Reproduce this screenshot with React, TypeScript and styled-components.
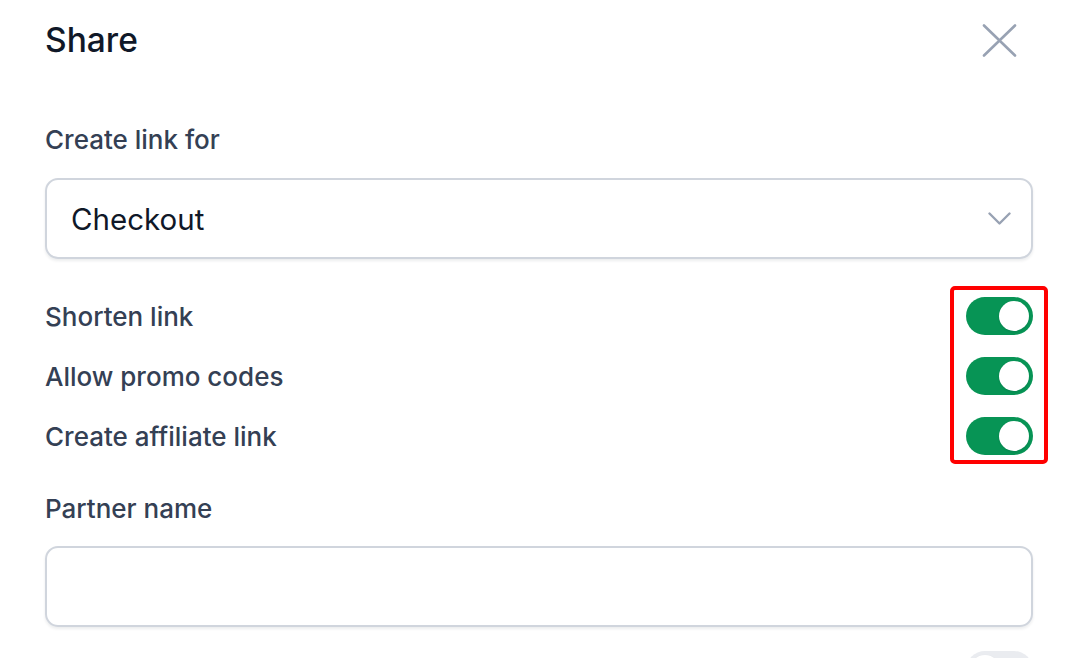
import { useState } from 'react'
import styled, { createGlobalStyle } from 'styled-components'

const GlobalStyle = createGlobalStyle`
    body {
        margin: 0;
        background: #ffffff;
        font-family: Inter, 'Noto Sans', sans-serif;
        color: #344054;
    }
`

const Page = styled.div`
    padding: 0 42px 0 45px;
    display: flex;
    flex-direction: column;
`

const Header = styled.div`
    height: 80px;
    display: flex;
    align-items: center;
    justify-content: space-between;
`

const Title = styled.h1`
    margin: 0;
    font-size: 33.5px;
    font-weight: 500;
    color: #101828;
`

const CloseButton = styled.button`
    border: none;
    background: none;
    padding: 0;
    margin-right: 16px;
    display: flex;
    color: #98a2b3;
    cursor: pointer;
`

const Label = styled.div<{ $gap: number }>`
    margin-top: ${(p) => p.$gap}px;
    font-size: 26px;
    font-weight: 500;
    line-height: 32px;
    color: #344054;
`

const Field = styled.div<{ $gap: number }>`
    margin-top: ${(p) => p.$gap}px;
    height: 81px;
    box-sizing: border-box;
    border: 2px solid #d0d5dd;
    border-radius: 13px;
    box-shadow: 0 2px 3px rgba(16, 24, 40, 0.08);
    display: flex;
    align-items: center;
    justify-content: space-between;
    padding: 0 20px 0 24px;
    font-size: 29.5px;
    color: #101828;
`

const Chevron = styled.svg`
    color: #98a2b3;
`

const ToggleList = styled.div`
    position: relative;
    margin-top: 38px;
    display: flex;
    flex-direction: column;
    gap: 22px;
`

const Highlight = styled.div`
    position: absolute;
    top: -11px;
    bottom: -9px;
    right: -15px;
    width: 98px;
    box-sizing: border-box;
    border: 4px solid #ff0000;
    border-radius: 5px;
    pointer-events: none;
`

const Row = styled.div<{ $gap?: number }>`
    margin-top: ${(p) => p.$gap ?? 0}px;
    height: 38px;
    display: flex;
    align-items: center;
    justify-content: space-between;
    font-size: 26px;
    font-weight: 500;
    color: #344054;
`

const Switch = styled.button<{ $on: boolean }>`
    width: 67px;
    height: 38px;
    border: none;
    padding: 4px;
    border-radius: 19px;
    background: ${(p) => (p.$on ? '#079455' : '#eaecf0')};
    display: flex;
    justify-content: ${(p) => (p.$on ? 'flex-end' : 'flex-start')};
    cursor: pointer;

    span {
        width: 30px;
        height: 30px;
        border-radius: 50%;
        background: #ffffff;
        box-shadow: 0 1px 2px rgba(16, 24, 40, 0.12);
    }
`

type ToggleProps = {
    label: string
    initial: boolean
}

function ToggleRow({ label, initial }: ToggleProps) {
    const [on, setOn] = useState(initial)
    return (
        <Row>
            <span>{label}</span>
            <Switch $on={on} onClick={() => setOn((v) => !v)}>
                <span />
            </Switch>
        </Row>
    )
}

export default function App() {
    const [off, setOff] = useState(false)

    return (
        <>
            <GlobalStyle />
            <Page>
                <Header>
                    <Title>Share</Title>
                    <CloseButton aria-label='Close'>
                        <svg width='35' height='33' viewBox='0 0 35 33'>
                            <path
                                d='M2 1.5 L33 31.5 M33 1.5 L2 31.5'
                                stroke='currentColor'
                                strokeWidth='2.6'
                                strokeLinecap='round'
                            />
                        </svg>
                    </CloseButton>
                </Header>

                <Label $gap={44}>Create link for</Label>
                <Field $gap={22}>
                    <span>Checkout</span>
                    <Chevron width='23' height='14' viewBox='0 0 23 14'>
                        <path
                            d='M1.5 1.5 L11.5 11.5 L21.5 1.5'
                            fill='none'
                            stroke='currentColor'
                            strokeWidth='2.4'
                            strokeLinecap='round'
                            strokeLinejoin='round'
                        />
                    </Chevron>
                </Field>

                <ToggleList>
                    <ToggleRow label='Shorten link' initial />
                    <ToggleRow label='Allow promo codes' initial />
                    <ToggleRow label='Create affiliate link' initial />
                    <Highlight />
                </ToggleList>

                <Label $gap={38}>Partner name</Label>
                <Field $gap={21} />

                <Row $gap={24}>
                    <span />
                    <Switch $on={off} onClick={() => setOff((v) => !v)}>
                        <span />
                    </Switch>
                </Row>
            </Page>
        </>
    )
}
